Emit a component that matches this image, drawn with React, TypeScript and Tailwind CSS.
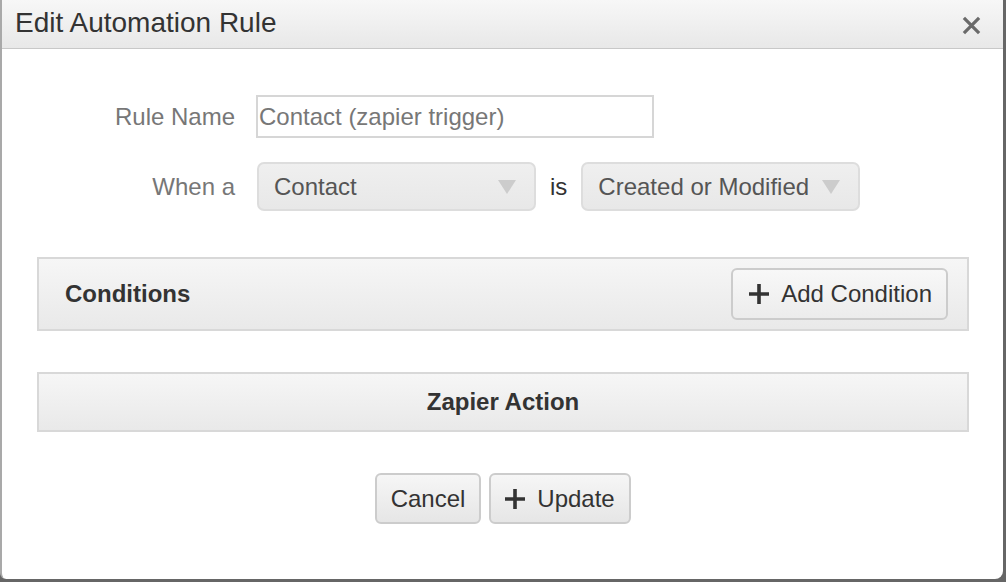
const Plus = ({ className }: { className?: string }) => (
  <svg viewBox="0 0 20 20" className={className} fill="none" stroke="currentColor" strokeWidth="3.6">
    <path d="M10 0v20M0 10h20" />
  </svg>
);

const Caret = () => (
  <svg viewBox="0 0 18 14" className="w-[18px] h-[14px]" fill="#cccccc">
    <path d="M0 0h18L9 14z" />
  </svg>
);

const SelectBox = ({ value }: { value: string }) => (
  <div className="flex items-center justify-between w-[279px] h-[49px] pl-[15px] pr-[18px] rounded-[7px] border-2 border-[#dddddd] bg-gradient-to-b from-[#efefef] to-[#e8e8e8] text-[#555555]">
    <span>{value}</span>
    <Caret />
  </div>
);

export default function App() {
  return (
    <div className="w-[1006px] h-[582px] bg-[#666666] font-['Liberation_Sans']">
      <div className="w-[1003px] h-[579px] bg-white rounded-br-[8px] rounded-bl-[6px] border-l-2 border-[#a9a9a9] flex flex-col">
        <div className="h-[49px] shrink-0 flex items-center justify-between pl-[13px] pr-[22px] border-b border-[#c8c8c8] bg-gradient-to-b from-[#f7f7f7] to-[#e8e8e8]">
          <h1 className="text-[28px] text-[#333333] leading-none -mt-[2px]">Edit Automation Rule</h1>
          <svg viewBox="0 0 20 20" className="w-[19px] h-[19px] mt-[2px]" stroke="#6a6a6a" strokeWidth="3.4">
            <path d="M2 2l16 16M18 2L2 18" />
          </svg>
        </div>

        <div className="flex flex-col text-[24px] leading-[28px]">
          <div className="flex items-center mt-[46px]">
            <label className="w-[233px] text-right text-[#777777]">Rule Name</label>
            <input
              type="text"
              defaultValue="Contact (zapier trigger)"
              className="ml-[21px] w-[398px] h-[43px] px-[1px] border-2 border-[#d6d6d6] text-[#777777] outline-none"
            />
          </div>

          <div className="flex items-center mt-[24px]">
            <label className="w-[233px] text-right text-[#777777]">When a</label>
            <div className="ml-[22px]">
              <SelectBox value="Contact" />
            </div>
            <span className="mx-[14px] text-[#333333]">is</span>
            <SelectBox value="Created or Modified" />
          </div>

          <div className="ml-[35px] mt-[46px] w-[932px] h-[74px] flex items-center justify-between pl-[26px] pr-[19px] border-2 border-[#d8d8d8] bg-gradient-to-b from-[#f6f6f6] to-[#e9e9e9]">
            <span className="font-bold text-[#333333]">Conditions</span>
            <button className="flex items-center gap-[12px] h-[52px] pl-[16px] pr-[14px] rounded-[6px] border-2 border-[#cccccc] bg-gradient-to-b from-[#f8f8f8] to-[#ececec] text-[#333333]">
              <Plus className="w-[20px] h-[20px]" />
              <span>Add Condition</span>
            </button>
          </div>

          <div className="ml-[35px] mt-[41px] w-[932px] h-[60px] flex items-center justify-center border-2 border-[#d8d8d8] bg-gradient-to-b from-[#f6f6f6] to-[#e9e9e9]">
            <span className="font-bold text-[#333333]">Zapier Action</span>
          </div>

          <div className="ml-[35px] w-[932px] mt-[41px] flex justify-center gap-[8px]">
            <button className="w-[106px] h-[51px] rounded-[6px] border-2 border-[#cccccc] bg-gradient-to-b from-[#f6f6f6] to-[#e6e6e6] text-[#333333]">
              Cancel
            </button>
            <button className="w-[142px] h-[51px] flex items-center justify-center gap-[12px] rounded-[6px] border-2 border-[#cccccc] bg-gradient-to-b from-[#f6f6f6] to-[#e6e6e6] text-[#333333]">
              <Plus className="w-[20px] h-[20px]" />
              <span>Update</span>
            </button>
          </div>
        </div>
      </div>
    </div>
  );
}
